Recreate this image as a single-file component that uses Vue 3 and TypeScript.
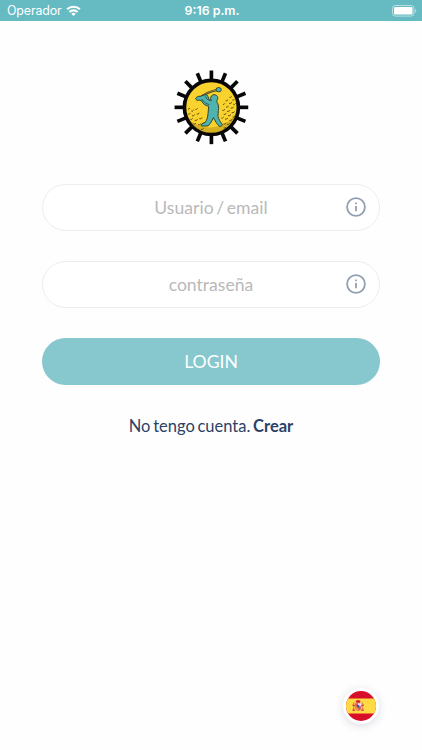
<script setup lang="ts">
import { ref } from 'vue'

interface Field {
  id: string
  type: string
  placeholder: string
}

const fields: Field[] = [
  { id: 'user', type: 'text', placeholder: 'Usuario / email' },
  { id: 'password', type: 'password', placeholder: 'contraseña' },
]
const values = ref<Record<string, string>>({ user: '', password: '' })

const spokes = Array.from({ length: 16 }, (_, i) => i * 22.5)

// Rows of dimples on the shaded side of the golf ball: x, y, length
const dimples: [number, number, number][] = [
  [184, 103, 7], [193, 111, 7], [173, 113, 7], [183, 121, 9], [196, 124, 7],
  [165, 124, 6], [174, 132, 8], [188, 135, 9], [163, 142, 8],
  [177, 145, 9], [191, 149, 9], [167, 154, 8], [180, 158, 9], [194, 162, 7],
  [160, 165, 7], [171, 168, 9], [184, 172, 9], [60, 138, 6], [70, 144, 7],
  [82, 139, 7], [61, 153, 6], [72, 158, 8], [86, 153, 8], [67, 169, 7],
  [80, 172, 9], [94, 167, 9], [76, 183, 8], [90, 185, 9], [104, 181, 8],
  [166, 183, 9], [177, 184, 8], [167, 195, 7], [99, 199, 8],
]
</script>

<template>
  <div class="screen">
    <header class="status">
      <div class="carrier">
        <span>Operador</span>
        <svg class="wifi" viewBox="0 0 16 12" aria-hidden="true">
          <path d="M8 11.7 5.6 9.2a3.5 3.5 0 0 1 4.8 0Z" />
          <path class="arc" d="M3.7 7.3a6.2 6.2 0 0 1 8.6 0" />
          <path class="arc" d="M1.2 4.5a9.8 9.8 0 0 1 13.6 0" />
        </svg>
      </div>
      <time class="clock">9:16 p.m.</time>
      <svg class="battery" viewBox="0 0 25 12" aria-hidden="true">
        <rect class="shell" x=".5" y=".5" width="21.5" height="10.6" rx="2.8" />
        <rect class="charge" x="2" y="2" width="18.5" height="7.6" rx="1.4" />
        <path class="tip" d="M23.2 3.9c1.5.6 1.5 3.2 0 3.8Z" />
      </svg>
    </header>

    <main class="content">
      <svg class="logo" viewBox="0 0 258 264" role="img" aria-label="Golf">
        <g class="spokes">
          <rect
            v-for="a in spokes"
            :key="a"
            x="124.7"
            y="25.5"
            width="11"
            height="32"
            :transform="`rotate(${a} 130.2 136)`"
          />
        </g>
        <circle class="ball" cx="130.2" cy="136" r="81" />
        <path
          class="shade"
          d="M204 150c-6 34-34 62-74 63-30 0-53-15-66-40 22 19 50 27 78 22 30-6 51-21 62-45Z"
        />
        <path
          v-for="(d, i) in dimples"
          :key="i"
          class="dimple"
          :d="`M${d[0]} ${d[1] + 3}q${d[2] / 2} 2 ${d[2]} -3`"
        />
        <path class="club-edge" d="M92 110C110 95 124 88 147 84" />
        <path class="club" d="M92 110C110 95 124 88 147 84" />
        <ellipse class="figure" cx="152" cy="83" rx="8" ry="6.5" />
        <path
          class="figure"
          d="M83 110c2-6 8-8 14-7l14-5c5-1 8 2 9 6l4 10 6 2c-5-8-1-17 8-18 9 0 14 8 10 15l-2 6c6 8 7 18 5 27l-1 17c2 9 7 17 13 24 0 5-4 6-9 6-7-7-12-15-18-26-4 10-9 18-16 25h-20c-2-5 3-9 11-10 6-7 8-17 9-27l2-22c-10-2-18-8-22-17l-7-2c-4 3-8 1-10-4Z"
        />
        <path class="crease" d="M101 111c5 8 12 14 23 17M112 103c2 6 6 10 12 12" />
      </svg>

      <form class="form" @submit.prevent>
        <label v-for="f in fields" :key="f.id" class="field">
          <input
            v-model="values[f.id]"
            class="input"
            :type="f.type"
            :placeholder="f.placeholder"
          />
          <svg class="info" viewBox="0 0 20 20" aria-hidden="true">
            <circle cx="10" cy="10" r="8.9" />
            <path d="M10 9v5.2" />
            <path d="M10 5.4v1.8" />
          </svg>
        </label>
        <button class="login" type="submit">LOGIN</button>
      </form>

      <p class="signup">No tengo cuenta. <b>Crear</b></p>
    </main>

    <footer class="footer">
      <button class="language" type="button" aria-label="Español">
        <svg class="flag" viewBox="0 0 30 30" aria-hidden="true">
          <defs>
            <clipPath id="round"><circle cx="15" cy="15" r="15" /></clipPath>
          </defs>
          <g clip-path="url(#round)">
            <rect width="30" height="30" fill="#d80f2b" />
            <rect y="7.5" width="30" height="15" fill="#ffda44" />
            <path d="M7 11.5h1.4v7.8H7zM15.8 11.5h1.4v7.8h-1.4z" fill="#d98a50" />
            <path d="M6.4 18.6h2.6v1.2H6.4zM15.2 18.6h2.6v1.2h-2.6zM6.2 13.4l3 .9v1l-3-.8zM18 13.4l-3 .9v1l3-.8z" fill="#d8324a" />
            <path d="M9.7 10.2q2.4-2.3 4.8 0l-.5 1.6h-3.8z" fill="#d8203a" />
            <path d="M9.2 12.2h5.8v4.6a2.9 2.9 0 0 1-5.8 0Z" fill="#d85a62" />
            <path d="M12.1 12.2H15v3h-2.9z" fill="#eadfe0" />
            <path d="M9.2 15.2h2.9v4.2a2.9 2.9 0 0 1-2.9-2.6Z" fill="#f09a32" />
            <circle cx="12.1" cy="15.4" r="1.4" fill="#4054a8" />
          </g>
        </svg>
      </button>
    </footer>
  </div>
</template>

<style>
body {
  margin: 0;
  background: #fefefe;
}
</style>

<style scoped>
.screen {
  box-sizing: border-box;
  display: flex;
  flex-direction: column;
  height: 100vh;
  overflow: hidden;
  background: #fefefe;
  font-family: Lato, sans-serif;
}

.status {
  box-sizing: border-box;
  display: grid;
  flex: none;
  grid-template-columns: 1fr auto 1fr;
  align-items: center;
  height: 21px;
  padding: 1px 5px 0 7px;
  background: #66bbc2;
  color: #fff;
  font: 400 12.4px/20px Inter, sans-serif;
}

.carrier {
  display: flex;
  align-items: center;
  gap: 4.5px;
  letter-spacing: -0.12px;
}

.wifi {
  width: 15px;
  height: 11.5px;
  fill: #fff;
}

.arc {
  fill: none;
  stroke: #fff;
  stroke-width: 2.3;
}

.clock {
  font-weight: 600;
}

.battery {
  justify-self: end;
  width: 25px;
  height: 12px;
}

.shell {
  fill: none;
  stroke: #b9e1e4;
}

.charge {
  fill: #fff;
}

.tip {
  fill: #b9e1e4;
}

.content {
  display: flex;
  flex: 1;
  flex-direction: column;
  align-items: center;
  padding: 41px 42px 0;
}

.logo {
  width: 86px;
  height: 88px;
}

.spokes {
  fill: #080808;
}

.ball {
  fill: #fad22d;
  stroke: #080808;
  stroke-width: 11;
}

.shade {
  fill: #b8941c;
  opacity: 0.55;
}

.dimple {
  fill: none;
  stroke: #4a3d10;
  stroke-width: 2.6;
}

.club-edge,
.club {
  fill: none;
  stroke: #3b3210;
  stroke-width: 6;
}

.club {
  stroke: #b7ac4c;
  stroke-width: 2.4;
}

.figure {
  fill: #4fb3b0;
  stroke: #26311f;
  stroke-width: 2.6;
  stroke-linejoin: round;
}

.crease {
  fill: none;
  stroke: #26311f;
  stroke-width: 2;
}

.form {
  display: flex;
  flex-direction: column;
  gap: 30.4px;
  width: 338px;
  margin-top: 33.6px;
}

.field {
  box-sizing: border-box;
  display: grid;
  grid-template-columns: 34px 1fr 34px;
  align-items: center;
  height: 47px;
  border: 1px solid #ededee;
  border-radius: 24px;
  background: #fff;
}

.input {
  grid-column: 2;
  min-width: 0;
  padding: 2px 0 0;
  border: 0;
  outline: 0;
  background: none;
  color: #2d4064;
  font: 400 17.6px/24px Lato, sans-serif;
  text-align: center;
  word-spacing: -1.9px;
}

.input::placeholder {
  color: #b9b9b9;
  opacity: 1;
}

.info {
  width: 20px;
  height: 20px;
  margin-left: 1px;
  fill: none;
  stroke: #929eb1;
  stroke-width: 1.8;
}

.login {
  height: 47px;
  padding: 0;
  border: 0;
  border-radius: 24px;
  background: #86c8ce;
  color: #fff;
  font: 400 17.6px/24px Lato, sans-serif;
}

.signup {
  margin: 29px 0 0;
  color: #2c4166;
  font-size: 16.5px;
  line-height: 24px;
  word-spacing: -1.5px;
}

.footer {
  display: flex;
  justify-content: flex-end;
  padding: 0 43px 26px;
}

.language {
  display: grid;
  place-items: center;
  width: 36px;
  height: 36px;
  padding: 0;
  border: 0;
  border-radius: 50%;
  background: #fff;
  box-shadow: 0 2px 8px rgb(60 70 110 / 18%);
}

.flag {
  width: 30px;
  height: 30px;
}
</style>
